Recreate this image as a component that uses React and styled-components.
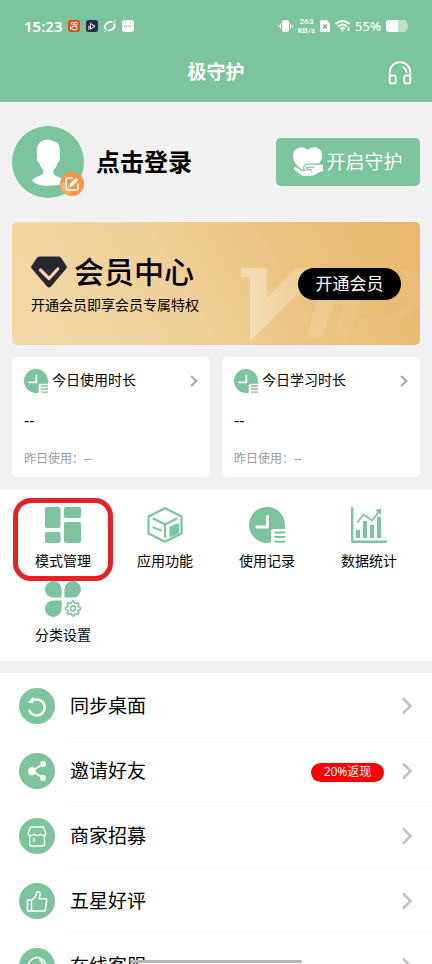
import React from "react";
import styled, { createGlobalStyle } from "styled-components";

const GREEN = "#7bc49e";

const GlobalStyle = createGlobalStyle`
  * { box-sizing: border-box; }
  body {
    margin: 0;
    background: #f1f1f1;
    color: #000;
    font-family: "Noto Sans", "Noto Sans CJK SC", sans-serif;
  }
  button {
    border: 0;
    padding: 0;
    background: none;
    color: inherit;
    font-family: inherit;
    text-align: left;
    cursor: pointer;
  }
  h1, h2, p, ul { margin: 0; padding: 0; }
  svg { display: block; flex-shrink: 0; }
`;

const Screen = styled.div`
  height: 100vh;
  overflow: hidden;
`;

const Header = styled.header`
  background: ${GREEN};
  color: #fff;
`;

const StatusBar = styled.div`
  display: flex;
  justify-content: space-between;
  align-items: center;
  height: 42px;
  padding: 10px 24px 0;
`;

const StatusGroup = styled.div`
  display: flex;
  align-items: center;
  gap: 5px;
`;

const Clock = styled.span`
  font: 600 15px/20px "Noto Sans", sans-serif;
  margin-right: 1px;
`;

const Speed = styled.span`
  display: grid;
  font: 600 8px/9px Roboto, sans-serif;
  text-align: center;
`;

const Battery = styled.span`
  font: 500 13px/20px "Noto Sans", sans-serif;
`;

const TitleBar = styled.div`
  display: grid;
  grid-template-columns: 1fr auto 1fr;
  align-items: center;
  height: 60px;
  padding: 0 20px;
`;

const Title = styled.h1`
  grid-column: 2;
  font-size: 19px;
  line-height: 28px;
  font-weight: 700;
`;

const SupportButton = styled.button`
  justify-self: end;
  margin-top: 2px;
`;

const Profile = styled.section`
  display: flex;
  align-items: center;
  gap: 12px;
  height: 120px;
  padding: 0 12px;
`;

const AvatarButton = styled.button`
  position: relative;
  border-radius: 50%;
`;

const EditBadge = styled.span`
  position: absolute;
  right: 0;
  bottom: 2px;
`;

const LoginButton = styled.button`
  flex: 1;
  font-size: 24px;
  line-height: 36px;
  font-weight: 700;
`;

const GuardButton = styled.button`
  display: flex;
  align-items: center;
  justify-content: center;
  gap: 3px;
  width: 144px;
  height: 48px;
  border-radius: 5px;
  background: ${GREEN};
  color: #fff;
  font-size: 19px;
  line-height: 28px;
  font-weight: 400;
`;

const Member = styled.section`
  position: relative;
  display: flex;
  align-items: center;
  justify-content: space-between;
  height: 123px;
  margin: 0 12px;
  padding: 0 19px;
  border-radius: 5px;
  overflow: hidden;
  background: linear-gradient(60deg, #f3d8a8 0%, #f0d09a 40%, #ebc07a 75%, #e8b86c 100%);
`;

const Watermark = styled.svg`
  position: absolute;
  right: 0;
  bottom: 0;
`;

const MemberText = styled.div`
  position: relative;
`;

const MemberHeading = styled.div`
  display: flex;
  align-items: center;
  gap: 7px;
`;

const MemberTitle = styled.h2`
  font-size: 30px;
  line-height: 40px;
  font-weight: 500;
`;

const MemberNote = styled.p`
  font-size: 14px;
  line-height: 22px;
  padding-top: 2px;
`;

const JoinButton = styled.button`
  position: relative;
  width: 103px;
  height: 32px;
  border-radius: 16px;
  background: #000;
  color: #fff;
  font-size: 17px;
  line-height: 32px;
  text-align: center;
`;

const Usage = styled.section`
  display: grid;
  grid-template-columns: 1fr 1fr;
  gap: 12px;
  padding: 12px 12px 13px;
`;

const UsageCard = styled.button`
  display: block;
  height: 120px;
  padding: 12px;
  border-radius: 5px;
  background: #fff;
`;

const UsageHead = styled.span`
  display: flex;
  align-items: center;
  gap: 4px;
  height: 24px;
  font-size: 14px;
  line-height: 20px;
`;

const UsageName = styled.span`
  flex: 1;
  padding-bottom: 2px;
`;

const UsageValue = styled.span`
  display: block;
  padding-top: 16px;
  font-size: 16px;
  line-height: 22px;
`;

const UsagePast = styled.span`
  display: block;
  padding-top: 19px;
  color: #999;
  font-size: 12px;
  font-weight: 400;
  line-height: 18px;
`;

const Features = styled.nav`
  display: grid;
  grid-template-columns: repeat(4, 1fr);
  align-content: start;
  height: 171px;
  margin-bottom: 12px;
  padding: 17px 12px 0;
  background: #fff;
`;

const Feature = styled.button`
  position: relative;
  display: flex;
  flex-direction: column;
  align-items: center;
  gap: 8px;
  height: 74px;
  font-size: 14px;
  line-height: 20px;
`;

const Highlight = styled.span`
  position: absolute;
  inset: -9px 1px 0;
  border: 5px solid #e71f26;
  border-radius: 18px;
`;

const Menu = styled.ul`
  list-style: none;
  background: #fff;
`;

const MenuItem = styled.li`
  display: flex;
`;

const MenuButton = styled.button`
  display: flex;
  flex: 1;
  align-items: center;
  gap: 15px;
  padding-left: 19px;
`;

const MenuBody = styled.span`
  display: flex;
  flex: 1;
  align-items: center;
  gap: 17px;
  height: 65px;
  padding: 2px 19px 0 0;
  border-bottom: 1px solid #f5f5f5;
  font-size: 19px;
  line-height: 28px;
`;

const MenuName = styled.span`
  flex: 1;
`;

const Tag = styled.span`
  width: 73px;
  height: 19px;
  margin-top: 2px;
  border-radius: 10px;
  background: #f00;
  color: #fff;
  font-size: 12px;
  line-height: 18px;
  text-align: center;
`;

const HomeBar = styled.div`
  position: fixed;
  left: 50%;
  bottom: 1px;
  width: 172px;
  height: 3px;
  margin-left: -86px;
  border-radius: 2px;
  background: #b3b3b3;
`;

const Line = ({ size = 36, box = 36, color = "#fff", w = 2, children, fill = "none" }) => (
  <svg width={size} height={size} viewBox={`0 0 ${box} ${box}`} fill={fill} stroke={color}
    strokeWidth={w} strokeLinecap="round" strokeLinejoin="round" aria-hidden="true">
    {children}
  </svg>
);

const Chevron = ({ small }) => small ? (
  <svg width="8" height="12" viewBox="0 0 8 12" fill="none" stroke="#aaa" strokeWidth="2"><path d="M1 1l5.500 5L1 11" /></svg>
) : (
  <svg width="12" height="18" viewBox="0 0 12 18" fill="none" stroke="#c2c3c6" strokeWidth="2.600"><path d="M2 1.500L9.500 9 2 16.500" /></svg>
);

const Headphones = () => (
  <svg width="24" height="24" viewBox="0 0 24 24" fill="none" stroke="#fff" strokeWidth="1.800" strokeLinejoin="round" strokeLinecap="round">
    <path d="M1.700 19V11.500a10.300 10.300 0 0 1 20.600 0V19" />
    <rect x="1.700" y="14.500" width="6" height="8" rx="1.500" />
    <rect x="16.300" y="14.500" width="6" height="8" rx="1.500" />
    <path d="M15 6.200q3 1.500 3.500 5" />
  </svg>
);

const Avatar = () => (
  <svg width="72" height="72" viewBox="0 0 72 72">
    <circle cx="36" cy="36" r="36" fill={GREEN} />
    <path fill="#fff" d="M36 13.500c2 0 4 .8 5.500 2 4 .2 6.300 3.800 6.300 9 0 2-.2 4-.4 6 1.400 1.500.2 5.500-1.800 6.500-.7 3-2 5-4.100 7v4c2.500 2.800 8.500 3.500 13 7.500-4.500 3-11 4.300-18.500 4.300S22 57.500 20 54.500c4-4.500 9-4.500 11.300-7V44c-2-2-3.200-4-4-7-2-1-3.500-4.500-2-6.500-.3-2-.5-4-.5-6 0-7 4.700-11 11.200-11z" />
  </svg>
);

const EditIcon = () => (
  <svg width="24" height="24" viewBox="0 0 24 24" fill="none" stroke="#fff" strokeWidth="1.600" strokeLinejoin="round" strokeLinecap="round">
    <circle cx="12" cy="12" r="12" fill="#fd9144" stroke="none" />
    <path d="M0 12q7-8 12 11A12 12 0 0 1 0 12z" fill="#feac70" stroke="none" />
    <path d="M12 6H8q-2 0-2 2v8q0 2 2 2h8q2 0 2-2v-4" />
    <path d="M10 14.500l.7-3L16 6l2 2-5.200 5.500z" fill="#fff" strokeWidth="1" />
  </svg>
);

const HeartHand = () => (
  <svg width="30" height="30" viewBox="0 0 30 30">
    <path fill="#fff" d="M14.600 3.200C11-1.500 0-1 0 9.500c0 5.500 4.500 9 9 13.500l4 3 13-9.500c2-2.300 3.200-4.500 3.200-7.500C29.200-1 18-1.500 14.600 3.200z" />
    <path fill="#fff" stroke={GREEN} strokeWidth="2.400" paintOrder="stroke" strokeLinejoin="round" d="M1 20.700q1.400-1 2.800 0l4.700 3.200 3 .3 1.500-.8q-2.200-.8-1.800-3 .5-2.700 4.200-2.700H30v6.200q-3.500.3-5.500 2.300Q21.500 29 17.500 29H12q-3.500 0-5.500-2.200L1.500 23q-1.200-1.200-.5-2.300z" />
    <path fill="none" stroke={GREEN} strokeWidth="1.300" strokeLinecap="round" d="M21 20.200h-5q-2.500 0-2.500 1.200t2.500 1h1.500q1 .1.500 1.600" />
  </svg>
);

const Diamond = () => (
  <svg width="36" height="32" viewBox="0 0 36 32">
    <path fill="#292831" d="M8.500.5h19q1.500 0 2.500 1.200L35.500 10q.8 1.500-.4 2.800L20 30.500q-2 2-4 0L.9 12.800Q-.3 11.500.5 10L6 1.700Q7 .5 8.500.5z" />
    <path fill="none" stroke="#f3d7a8" strokeWidth="3.200" strokeLinecap="round" strokeLinejoin="round" d="M9.500 14L18 22.500l8.800-9.500" />
  </svg>
);

const ClockList = ({ size }) => (
  <svg width={size} height={size} viewBox="0 0 36 36">
    <path fill={GREEN} d="M36 18A18 18 0 1 0 22 35.500V25q0-3 3-3h11z" />
    <path fill="none" stroke="#fff" strokeWidth="2.800" strokeLinecap="round" strokeLinejoin="round" d="M18.500 9.500V20H7.800" />
    <path stroke={GREEN} strokeWidth="2" d="M25.500 25.500H36M25.500 30H36M25.500 34.800H36" />
  </svg>
);

const Tiles = () => (
  <svg width="36" height="36" viewBox="0 0 36 36" fill={GREEN}>
    <rect width="15.500" height="21" rx="2" /><rect x="19" width="17" height="11" rx="2" />
    <rect y="25" width="15.500" height="11" rx="2" /><rect x="19" y="15" width="17" height="21" rx="2" />
  </svg>
);

const Cube = () => (
  <Line color={GREEN} w={2.2}>
    <path d="M18 1.200L34.500 9.500v17L18 34.800 1.500 26.500v-17z" />
    <path d="M6.500 11.800L18 17.200 29.500 11.800M18 17.200V30M6.500 20.500l7 2.800" />
    <path d="M23.500 20.500l7.500-3v8l-7.500 3.500z" fill={GREEN} />
  </Line>
);

const Chart = () => (
  <svg width="36" height="36" viewBox="0 0 36 36" fill={GREEN}>
    <path d="M5 23h4v8H5zM12 14h4v17h-4zM19 18h4v13h-4zM26 10h4v21h-4zM24 3l6-1.500V8z" />
    <path fill="none" stroke={GREEN} strokeWidth="2.400" strokeLinecap="round" strokeLinejoin="round" d="M1.200 1.200v33.500h33.600" />
    <path fill="none" stroke={GREEN} strokeWidth="1.700" strokeLinecap="round" d="M6.500 15l6-7.500 8.500 6L28.500 4" />
  </svg>
);

const gearPoints = Array.from({ length: 32 }, (_, i) => {
  const a = ((i - 0.5) / 32) * Math.PI * 2;
  const r = i % 4 < 2 ? 7.6 : 5.6;
  return `${28 + r * Math.cos(a)},${27.5 + r * Math.sin(a)}`;
}).join(" ");

const Petals = () => (
  <svg width="36" height="36" viewBox="0 0 36 36" fill={GREEN}>
    <path d="M8.300 0A8.300 8.300 0 0 1 16.600 8.300V16.600H8.300A8.300 8.300 0 0 1 8.300 0zM27.700 0a8.300 8.300 0 0 1 0 16.600h-8.300V8.300A8.300 8.300 0 0 1 27.700 0zM8.300 19.400h8.300v8.300a8.300 8.300 0 1 1-8.300-8.300z" />
    <g fill="none" stroke={GREEN} strokeWidth="1.500" strokeLinejoin="round">
      <polygon points={gearPoints} /><circle cx="28" cy="27.500" r="2.500" />
    </g>
  </svg>
);

const glyphs = {
  sync: <g strokeWidth="2.600"><path d="M13 11.700h7a8 8 0 1 1-9.500 11" /><path d="M10 14l4-4.500v5z" fill="#fff" strokeWidth="1" /></g>,
  share: <g><circle cx="13" cy="18.200" r="4" fill="#fff" stroke="none" /><circle cx="24" cy="11" r="3" fill="#fff" stroke="none" /><circle cx="24" cy="25" r="3" fill="#fff" stroke="none" /><path strokeWidth="1.600" d="M24 11l-11 7 11 7" /></g>,
  shop: <g strokeWidth="1.400"><path d="M11.500 9h13l2.300 6.500q-.5 2.300-2.600 2-1.800.2-2.900-1.400-1.300 1.500-3 1.400-2 .1-3.200-1.400-1.200 1.500-3 1.400-2.800.2-3-2z" /><path d="M10.700 18v8q0 2 2 2h10.800q2 0 2-2v-8M15 20.500v3" /></g>,
  like: <g strokeWidth="1.500"><path d="M8.500 17h4v11h-4zM12.500 17c4-1 4-4.500 5.500-8 2.500-.8 3.600.8 3 3l-1 3.800h7q1 .2.700 1.500L26 28H12.500z" /></g>,
  service: <g strokeWidth="1.700"><path d="M9.500 22v-4a8.500 8.500 0 0 1 17 0v4M21 12q2.300 1.300 2.500 4" /><rect x="9.500" y="20" width="5" height="7" rx="1" /><rect x="21.500" y="20" width="5" height="7" rx="1" /></g>,
};

const MenuIcon = ({ name }) => (
  <Line><circle cx="18" cy="18" r="18" fill={GREEN} stroke="none" />{glyphs[name]}</Line>
);

const NoticeIcons = () => (
  <svg width="66" height="12" viewBox="0 0 66 12" fill="none" stroke="#fff" strokeWidth="1">
    <rect width="12" height="12" rx="2.500" fill="#e64b18" stroke="none" />
    <circle cx="4.500" cy="3.700" r="1.300" /><circle cx="7.900" cy="3.700" r="1.600" /><rect x="4" y="6.300" width="5" height="3.500" rx="1" /><path d="M2.500 6.500v3M2.500 8H4" />
    <rect x="18" width="12" height="12" rx="2.500" fill="#292e50" stroke="none" />
    <path d="M22.500 3.500L27 6.200 22.500 9zM21 5.500V10" />
    <path d="M38 9C35 6.500 38.500 1 44.500 2" strokeWidth="1.800" />
    <path d="M40 10.300c5 .7 8-4 6-7" strokeWidth="1.800" />
    <path d="M36.500 11.500L39 10M45.500 2L48 .5" />
    <rect x="54" width="12" height="12" rx="3" fill="#fff" stroke="none" /><path d="M56 6.200h8" stroke="#9dd0b5" strokeDasharray="1.400 .5" strokeWidth="1.400" />
  </svg>
);

const Vibrate = () => (
  <svg width="15" height="14" viewBox="0 0 15 14" stroke="#fff"><rect x="4.500" y="1.500" width="6" height="11" rx="1.500" fill="#fff" /><path d="M2.500 4.500v5M.7 6v2.500M12.500 4.500v5M14.300 6v2.500" /></svg>
);
const Sim = () => (
  <svg width="10" height="12" viewBox="0 0 10 12"><path fill="#fff" d="M1.500 0H6.500L10 3.500v7Q10 12 8.500 12h-7Q0 12 0 10.500v-9Q0 0 1.500 0z" /><path d="M3 4.500l4 4M7 4.500l-4 4" stroke="#6fae8d" strokeWidth="1.300" /></svg>
);
const Wifi = () => (
  <svg width="15" height="12" viewBox="0 0 15 12" fill="none" stroke="#fff" strokeWidth="1.700"><path d="M.5 4Q7.500-2 14.500 4M2.800 6.500Q7.500 2.500 12 6.500M5 8.800q2.500-2 5 0" /><path d="M7.500 9v2.500M13.500 7v4" /></svg>
);
const BatteryIcon = () => (
  <svg width="22" height="12" viewBox="0 0 22 12"><path fill="#bce1cd" d="M3 0h15q3 0 3 3 1 1 1 3t-1 3q0 3-3 3H3Q0 12 0 9V3Q0 0 3 0z" /><path fill="#fff" d="M3 0h9v12H3Q0 12 0 9V3Q0 0 3 0z" /></svg>
);

const usage = [
  { name: "今日使用时长", past: "昨日使用：--" },
  { name: "今日学习时长", past: "昨日使用：--" },
];

const features = [
  { name: "模式管理", icon: <Tiles />, marked: true },
  { name: "应用功能", icon: <Cube /> },
  { name: "使用记录", icon: <ClockList size={36} /> },
  { name: "数据统计", icon: <Chart /> },
  { name: "分类设置", icon: <Petals /> },
];

const menu = [
  { name: "同步桌面", icon: "sync" },
  { name: "邀请好友", icon: "share", tag: "20%返现" },
  { name: "商家招募", icon: "shop" },
  { name: "五星好评", icon: "like" },
  { name: "在线客服", icon: "service" },
];

export default function App() {
  return (
    <Screen>
      <GlobalStyle />
      <Header>
        <StatusBar>
          <StatusGroup><Clock>15:23</Clock><NoticeIcons /></StatusGroup>
          <StatusGroup>
            <Vibrate /><Speed><span>263</span><span>KB/s</span></Speed><Sim /><Wifi /><Battery>55%</Battery><BatteryIcon />
          </StatusGroup>
        </StatusBar>
        <TitleBar>
          <Title>极守护</Title>
          <SupportButton aria-label="客服"><Headphones /></SupportButton>
        </TitleBar>
      </Header>
      <main>
        <Profile>
          <AvatarButton aria-label="头像"><Avatar /><EditBadge><EditIcon /></EditBadge></AvatarButton>
          <LoginButton>点击登录</LoginButton>
          <GuardButton><HeartHand />开启守护</GuardButton>
        </Profile>
        <Member>
          <Watermark width="180" height="78" viewBox="0 0 180 78" aria-hidden="true">
            <defs>
              <linearGradient id="shine" x1="0" x2="1">
                <stop offset="0" stopColor="#fff" stopOpacity=".36" />
                <stop offset="1" stopColor="#fff" stopOpacity=".12" />
              </linearGradient>
            </defs>
            <path fill="url(#shine)" d="M1 1h26v30L56 1h28L10 74V10H1z" />
            <path fill="#fff" fillOpacity=".13" d="M82 20h18L82 71H66z" />
            <path fill="#fff" fillOpacity=".05" d="M108 20h15l-8 32h22q26-3 31-22 4-21-13-28h20q13 12 6 32-9 19-38 19h-28l-5 18H94z" />
          </Watermark>
          <MemberText>
            <MemberHeading><Diamond /><MemberTitle>会员中心</MemberTitle></MemberHeading>
            <MemberNote>开通会员即享会员专属特权</MemberNote>
          </MemberText>
          <JoinButton>开通会员</JoinButton>
        </Member>
        <Usage>
          {usage.map((u) => (
            <UsageCard key={u.name}>
              <UsageHead><ClockList size={24} /><UsageName>{u.name}</UsageName><Chevron small /></UsageHead>
              <UsageValue>--</UsageValue>
              <UsagePast>{u.past}</UsagePast>
            </UsageCard>
          ))}
        </Usage>
        <Features>
          {features.map((f) => (
            <Feature key={f.name}>{f.icon}<span>{f.name}</span>{f.marked && <Highlight />}</Feature>
          ))}
        </Features>
        <Menu>
          {menu.map((m) => (
            <MenuItem key={m.name}>
              <MenuButton>
                <MenuIcon name={m.icon} />
                <MenuBody><MenuName>{m.name}</MenuName>{m.tag && <Tag>{m.tag}</Tag>}<Chevron /></MenuBody>
              </MenuButton>
            </MenuItem>
          ))}
        </Menu>
      </main>
      <HomeBar />
    </Screen>
  );
}
